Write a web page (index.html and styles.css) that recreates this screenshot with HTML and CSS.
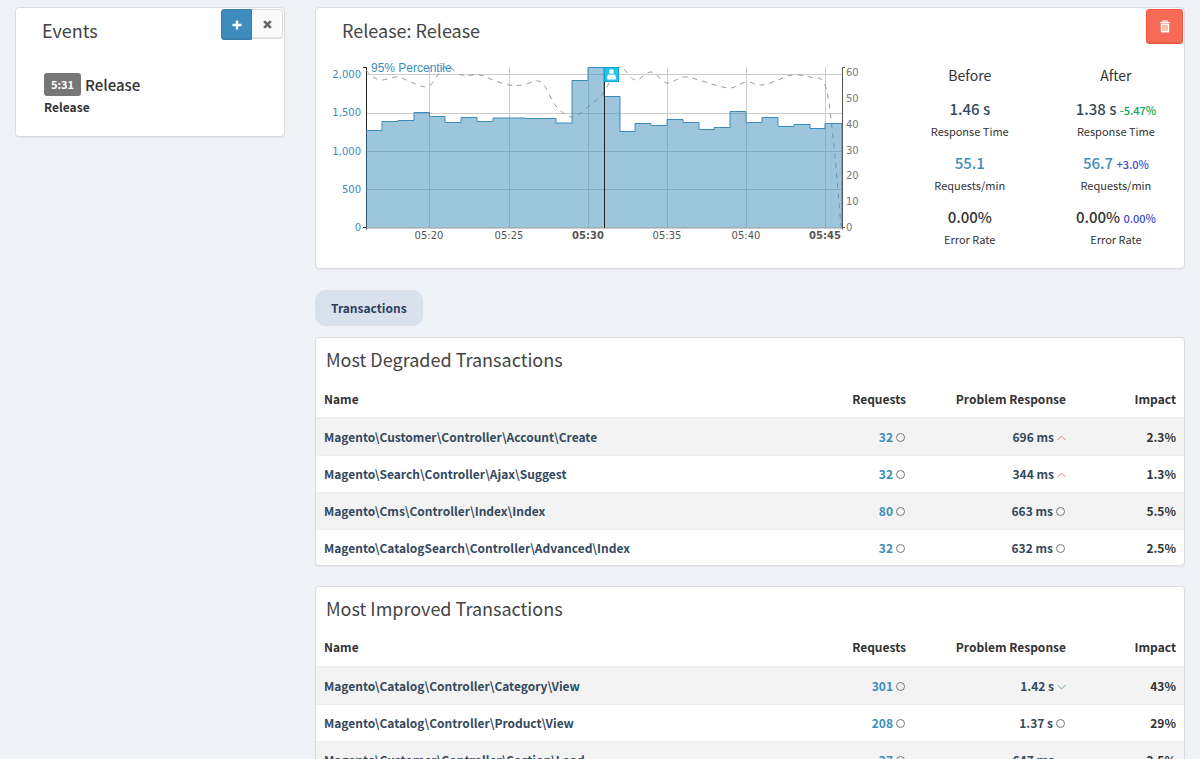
FILE: index.html
```html
<!DOCTYPE html>
<html lang="en">
<head>
<meta charset="utf-8">
<title>Release</title>
<link rel="stylesheet" href="styles.css">
</head>
<body>
<div class="page">
  <aside class="side">
    <section class="card events">
      <div class="btn-group">
        <button class="btn btn-add" type="button" aria-label="Add event"><svg width="10" height="10" viewBox="0 0 10 10"><path d="M5 .5v9M.5 5h9" stroke="currentColor" stroke-width="2.4"/></svg></button>
        <button class="btn btn-close" type="button" aria-label="Close"><svg width="9" height="9" viewBox="0 0 10 10"><path d="M1.3 1.3l7.4 7.4M8.7 1.3L1.3 8.7" stroke="currentColor" stroke-width="3"/></svg></button>
      </div>
      <h2 class="card-title">Events</h2>
      <div class="event">
        <div class="event-head"><span class="time">5:31</span><span class="event-name">Release</span></div>
        <div class="event-note">Release</div>
      </div>
    </section>
  </aside>

  <main class="main">
    <section class="card release">
      <button class="btn btn-delete" type="button" aria-label="Delete release"><svg width="12" height="13" viewBox="0 0 12 13"><path d="M1 2.5h10M4 2.3V1h4v1.3" fill="none" stroke="currentColor" stroke-width="1.2"/><path d="M1.8 3.4h8.4v8q0 1.2-1.2 1.2H3q-1.2 0-1.2-1.2z" fill="currentColor"/><path d="M4 4.8v6M6 4.8v6M8 4.8v6" stroke="#f76b56" stroke-width=".9"/></svg></button>
      <h2 class="card-title">Release: Release</h2>
      <div class="overview">
        <svg class="chart" width="548" height="190" viewBox="0 0 548 190" role="img" aria-label="95% percentile response time">
          <g transform="translate(44 11)">
            <g class="grid">
              <path d="M0 6.5h476M0 45.5h476M0 83.5h476M0 121.5h476"/>
              <path d="M63.5-1v161M143.5-1v161M222.5-1v161M301.5-1v161M380.5-1v161M459.5-1v161"/>
            </g>
            <path class="axis" d="M-3-.5h3.5v162M-3 159.5h3.5"/>
            <path class="dash" id="load"/>
            <path class="area" id="area"/>
            <path class="steps" id="steps"/>
            <path class="base" d="M0 160h476"/>
            <path class="axis axis-right" d="M479-.5h-2.5v162M479 159.5h-2.5"/>
            <path class="marker" d="M238.5 0v160"/>
            <g transform="translate(238 -1)">
              <rect class="pin" x=".5" y=".5" width="14" height="14"/>
              <circle cx="7.5" cy="4.7" r="2.4" fill="#fff"/>
              <path d="M3.2 12.5q-.4-5 2-5.2 2.3 1.5 4.6 0 2.4.2 2 5.2z" fill="#fff"/>
            </g>
            <g class="label-left">
              <text x="-5" y="10">2,000</text><text x="-5" y="48">1,500</text><text x="-5" y="87">1,000</text><text x="-5" y="125">500</text><text x="-5" y="163">0</text>
            </g>
            <g class="label-right">
              <text x="480" y="8">60</text><text x="480" y="34">50</text><text x="480" y="60">40</text><text x="480" y="86">30</text><text x="480" y="111">20</text><text x="480" y="137">10</text><text x="480" y="163">0</text>
            </g>
            <g class="label-x">
              <text x="63" y="171">05:20</text><text x="143" y="171">05:25</text><text class="strong" x="222" y="171">05:30</text><text x="301" y="171">05:35</text><text x="380" y="171">05:40</text><text class="strong" x="459" y="171">05:45</text>
            </g>
            <text class="series" x="5" y="4">95% Percentile</text>
          </g>
        </svg>
        <div class="stats">
          <h3>Before</h3>
          <p class="stat navy">1.46 s</p><p class="caption">Response Time</p>
          <p class="stat blue">55.1</p><p class="caption">Requests/min</p>
          <p class="stat">0.00%</p><p class="caption">Error Rate</p>
        </div>
        <div class="stats">
          <h3>After</h3>
          <p class="stat navy">1.38 s <small class="good">-5.47%</small></p><p class="caption">Response Time</p>
          <p class="stat blue">56.7 <small>+3.0%</small></p><p class="caption">Requests/min</p>
          <p class="stat">0.00% <small>0.00%</small></p><p class="caption">Error Rate</p>
        </div>
      </div>
    </section>

    <nav class="tabs"><a class="tab" href="#transactions">Transactions</a></nav>

    <section class="card listing" id="transactions">
      <h2 class="card-title">Most Degraded Transactions</h2>
      <table>
        <thead><tr><th>Name</th><th>Requests</th><th>Problem Response</th><th>Impact</th></tr></thead>
        <tbody>
          <tr><td><a href="#">Magento\Customer\Controller\Account\Create</a></td><td class="blue">32<i class="same"></i></td><td class="navy">696 ms<svg class="trend up" viewBox="0 0 9 6"><path d="M.5 5L4.5 1l4 4"/></svg></td><td>2.3%</td></tr>
          <tr><td><a href="#">Magento\Search\Controller\Ajax\Suggest</a></td><td class="blue">32<i class="same"></i></td><td class="navy">344 ms<svg class="trend up" viewBox="0 0 9 6"><path d="M.5 5L4.5 1l4 4"/></svg></td><td>1.3%</td></tr>
          <tr><td><a href="#">Magento\Cms\Controller\Index\Index</a></td><td class="blue">80<i class="same"></i></td><td class="navy">663 ms<i class="same"></i></td><td>5.5%</td></tr>
          <tr><td><a href="#">Magento\CatalogSearch\Controller\Advanced\Index</a></td><td class="blue">32<i class="same"></i></td><td class="navy">632 ms<i class="same"></i></td><td>2.5%</td></tr>
        </tbody>
      </table>
    </section>

    <section class="card listing">
      <h2 class="card-title">Most Improved Transactions</h2>
      <table>
        <thead><tr><th>Name</th><th>Requests</th><th>Problem Response</th><th>Impact</th></tr></thead>
        <tbody>
          <tr><td><a href="#">Magento\Catalog\Controller\Category\View</a></td><td class="blue">301<i class="same"></i></td><td class="navy">1.42 s<svg class="trend down" viewBox="0 0 9 6"><path d="M.5 1L4.5 5l4-4"/></svg></td><td>43%</td></tr>
          <tr><td><a href="#">Magento\Catalog\Controller\Product\View</a></td><td class="blue">208<i class="same"></i></td><td class="navy">1.37 s<i class="same"></i></td><td>29%</td></tr>
          <tr><td><a href="#">Magento\Customer\Controller\Section\Load</a></td><td class="blue">27<i class="same"></i></td><td class="navy">647 ms<svg class="trend down" viewBox="0 0 9 6"><path d="M.5 1L4.5 5l4-4"/></svg></td><td>2.5%</td></tr>
        </tbody>
      </table>
    </section>
  </main>
</div>
<script src="script.js"></script>
</body>
</html>
```
FILE: styles.css
```css
* { box-sizing: border-box; }
html { background: #fff; }
body {
  margin: 0;
  height: 100vh;
  overflow: hidden;
  border-right: 4px solid #fff;
  background: #eff3f8;
  color: #333;
  font: 700 12px/20px "Noto Sans CJK SC", "Open Sans", sans-serif;
}
h2, h3, p { margin: 0; }
a { color: inherit; text-decoration: none; }

.page { display: grid; grid-template-columns: 1fr 3fr; align-items: start; min-height: 100vh; background: #eff3f8; }
.side, .main { padding: 7px 15px 0; min-width: 0; }

.card {
  position: relative;
  background: #fff;
  border: 1px solid #dcdcdc;
  border-radius: 4px;
  box-shadow: 0 1px 1px rgba(0, 0, 0, .05);
}
.card-title { font-size: 18px; line-height: 24px; font-weight: 400; color: #444; }

.btn {
  display: flex;
  align-items: center;
  justify-content: center;
  padding: 0;
  border: 1px solid;
  box-shadow: inset 0 -1px 0 rgba(0, 0, 0, .09);
}
.btn-group { position: absolute; top: 1px; right: 1px; display: flex; }
.btn-add { width: 31px; height: 31px; background: #3c8dbc; border-color: #367fa9; color: #fff; border-radius: 3px 0 0 3px; }
.btn-close { width: 31px; height: 30px; background: #fafafa; border-color: #ddd; border-left: 0; color: #666; border-radius: 0 3px 3px 0; }
.btn-delete { position: absolute; top: 1px; right: 1px; width: 37px; height: 35px; background: #f76b56; border-color: #f4543c; color: #fff; border-radius: 3px; }

.events { padding: 10px 26px 18px; }
.event { padding: 31px 2px 0; line-height: 22px; }
.event-head { display: flex; align-items: center; gap: 4px; height: 23px; }
.time { background: #777; color: #fff; font-size: 11px; line-height: 23px; padding: 0 7px; border-radius: 3px; }
.event-name { font-size: 15px; font-weight: 500; }

.release { padding: 10px 0 0; }
.release .card-title { padding-left: 26px; }
.overview { display: grid; grid-template-columns: 4fr 1fr 1fr; margin: 15px -5px 0 -4px; padding-bottom: 10px; }
.chart { display: block; max-width: 100%; height: auto; margin-left: 10px; }
.stats { text-align: center; padding-top: 6px; }
.stats h3 { font-size: 14px; line-height: 24px; font-weight: 400; margin-bottom: 9px; }
.stat { font-size: 15px; line-height: 26px; font-weight: 500; white-space: nowrap; }
.stat small { font-size: 11px; line-height: 1; color: #3c4cc8; }
.stat small.good { color: #00a65a; }
.caption { font-size: 11px; line-height: 18px; font-weight: 400; margin-bottom: 10px; }
.navy, td a { color: #34495e; }
.blue { color: #3c8dbc; }

.grid path { fill: none; stroke: #ccc; }
.axis { fill: none; stroke: #222; }
.axis-right { stroke: #555; }
.dash { fill: none; stroke: #999; stroke-dasharray: 5 5; }
.area { fill: #3c8dbc; fill-opacity: .5; }
.steps { fill: none; stroke: #3c8dbc; }
.base { stroke: #999; }
.marker { stroke: #222; }
.pin { fill: #29c4ee; stroke: #00a6d0; }
.chart text { font: 10px "DejaVu Sans", sans-serif; fill: #555; }
.label-left { text-anchor: end; }
.label-x { text-anchor: middle; }
.chart .label-left text, .chart .series { fill: #3c8dbc; }
.chart .label-right text { fill: #777; }
.chart .label-x .strong { font-weight: bold; }
.chart .series { font: 12px "Liberation Sans", sans-serif; }

.tabs { display: flex; padding: 21px 0 11px; }
.tab { background: #d9e1ec; color: #2c4160; border-radius: 10px; padding: 8px 16px; }

.listing { margin-bottom: 20px; padding-top: 9px; overflow: hidden; }
.listing .card-title { padding-left: 10px; }
table { width: 100%; border-collapse: collapse; table-layout: fixed; margin: 9px 0 -2px; }
th, td { padding: 8px; text-align: right; font-weight: 700; white-space: nowrap; }
th { height: 38px; border-bottom: 2px solid #eee; }
td { height: 37px; border-top: 1px solid #eee; }
th:first-child, td:first-child { text-align: left; }
th:nth-child(2) { width: 110px; }
th:nth-child(3) { width: 160px; }
th:nth-child(4) { width: 110px; }
tbody tr:nth-child(odd) { background: #f3f3f3; }
.same { display: inline-block; width: 9px; height: 9px; margin: 0 1px 0 3px; border: 1px solid #777; border-radius: 50%; }
.trend { width: 9px; height: 6px; margin-left: 3px; vertical-align: 1px; fill: none; }
.up { stroke: #dd8477; }
.down { stroke: #62b08a; }
```
FILE: script.js
```js
// Left edge and height of each one-minute bucket, in plot coordinates.
const buckets = [
  [0, 62.5], [16, 53.5], [32, 52.5], [48, 44.5], [63.5, 48.5], [79, 54.5], [95, 49.5],
  [111, 53.5], [127, 50], [159, 50.5], [190, 55], [206, 12.5], [222, -0.5], [238, 28.5],
  [254, 63.5], [269, 55.5], [285, 57.5], [301, 51.5], [317, 54.5], [333, 61.5], [348, 59.5],
  [364, 43.5], [380, 54.5], [396, 49.5], [412, 58.5], [428, 56.5], [444, 60.5], [459, 55.5]
];
const load = [
  [0, 2], [7, 9], [16, 12], [32, 9], [47, 15], [63, 18], [79, -1], [95, 7], [114, 7], [127, 12],
  [143, 17], [157, 17], [175, 14], [190, 38], [206, 49], [222, 39], [238, 24], [253, -1],
  [269, 12], [285, 4], [301, 15], [317, 9], [333, 12], [349, 17], [365, 20], [380, 14],
  [396, 17], [412, 12], [426, 7], [444, 9], [459, 17], [467, 69], [475, 158]
];
const right = 476;
let steps = `M0 ${buckets[0][1]}`;
buckets.forEach(([, y], i) => {
  const end = i + 1 < buckets.length ? buckets[i + 1][0] : right;
  steps += `V${y}H${end}`;
});
document.getElementById("steps").setAttribute("d", steps + "V160");
document.getElementById("area").setAttribute("d", steps + "V160H0Z");

// Smooth curve through the points.
let curve = `M${load[0]}`;
for (let i = 0; i < load.length - 1; i++) {
  const p0 = load[Math.max(i - 1, 0)], p1 = load[i], p2 = load[i + 1];
  const p3 = load[Math.min(i + 2, load.length - 1)];
  curve += `C${p1[0] + (p2[0] - p0[0]) / 6} ${p1[1] + (p2[1] - p0[1]) / 6} ` +
    `${p2[0] - (p3[0] - p1[0]) / 6} ${p2[1] - (p3[1] - p1[1]) / 6} ${p2}`;
}
document.getElementById("load").setAttribute("d", curve);
```
